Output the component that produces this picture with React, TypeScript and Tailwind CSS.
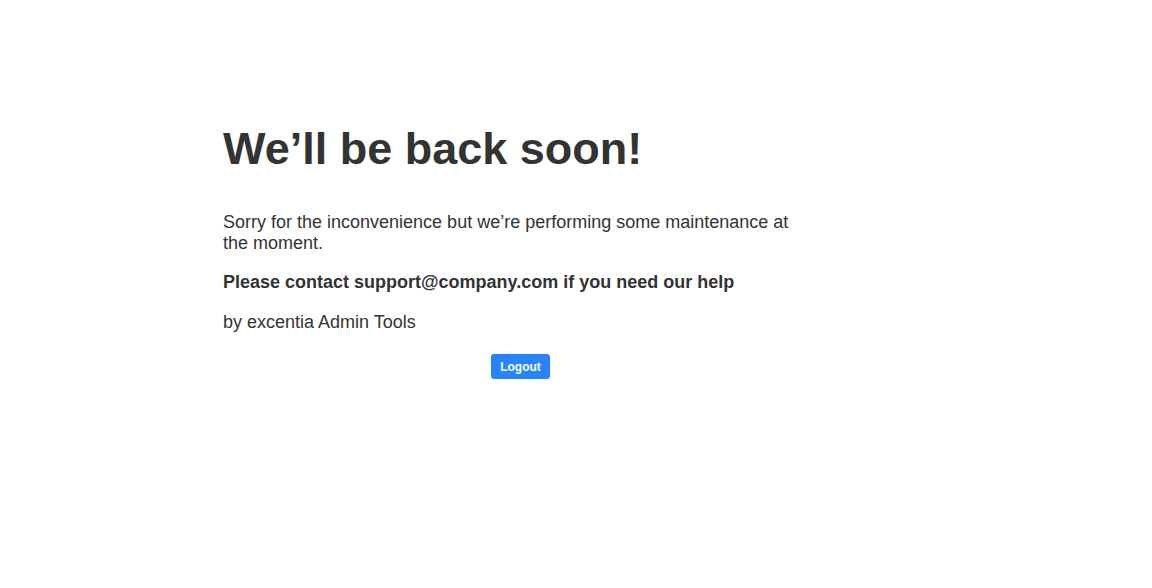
export default function App() {
  return (
    <div className="min-h-[588px] bg-white text-[#333] font-['Liberation_Sans',Arial,sans-serif]">
      <div className="ml-[223px] w-[595px] pt-[123px]">
        <h1 className="text-[45px] font-bold leading-[52px]">We’ll be back soon!</h1>
        <div className="mt-[37px] text-[18px] leading-[21px]">
          <p>Sorry for the inconvenience but we’re performing some maintenance at the moment.</p>
          <p className="mt-[18px] font-bold">Please contact support@company.com if you need our help</p>
          <p className="mt-[19px]">by excentia Admin Tools</p>
        </div>
        <div className="mt-[21px] flex justify-center">
          <button className="h-[25px] w-[59px] rounded-[3px] bg-[#2684ff] text-[12px] font-bold text-white">
            Logout
          </button>
        </div>
      </div>
    </div>
  );
}
